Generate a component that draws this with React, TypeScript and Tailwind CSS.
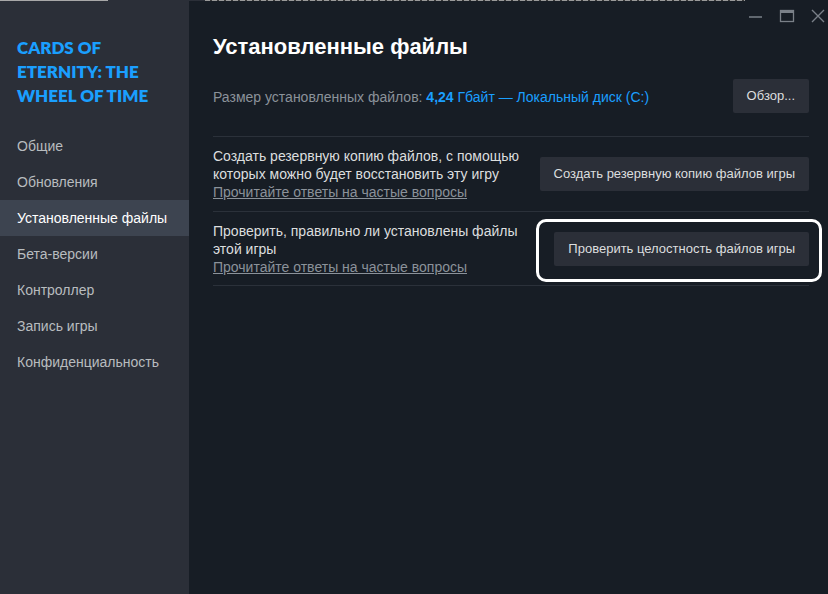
import React from "react";

const navItems = [
  "Общие",
  "Обновления",
  "Установленные файлы",
  "Бета-версии",
  "Контроллер",
  "Запись игры",
  "Конфиденциальность",
];

export default function App() {
  return (
    <div
      className="relative w-[828px] h-[594px] flex bg-[#171d25] overflow-hidden"
      style={{ fontFamily: '"Liberation Sans", Arial, sans-serif' }}
    >
      {/* top cut-off strip */}
      <div className="absolute top-0 left-0 w-full h-[1px] flex">
        <div className="w-[108px] bg-[#a8a8a8]" />
        <div className="w-[97px] bg-[#2b2f38]" />
        <div className="w-[540px] bg-[repeating-linear-gradient(90deg,#9a9a9a_0px,#9a9a9a_5px,#3a3a3a_5px,#3a3a3a_7px)]" />
      </div>

      {/* Sidebar */}
      <aside className="w-[189px] shrink-0 bg-[#2b2f38] flex flex-col pt-[36px]">
        <div
          className="px-[17px] text-[#1a9fff] text-[17px] leading-[24px] font-bold uppercase"
          style={{ fontFamily: '"Lato", "Open Sans", sans-serif', fontWeight: 800 }}
        >
          Cards of Eternity: The Wheel of Time
        </div>
        <nav className="mt-[20px] flex flex-col">
          {navItems.map((item) => (
            <div
              key={item}
              className={
                item === "Установленные файлы"
                  ? "h-[36px] flex items-center px-[17px] text-[14px] text-white bg-[#3d4450]"
                  : "h-[36px] flex items-center px-[17px] text-[14px] text-[#b8bcbf]"
              }
            >
              {item}
            </div>
          ))}
        </nav>
      </aside>

      {/* Main */}
      <main className="flex-1 flex flex-col pl-[24px] pr-[19px] pt-[33px]">
        <h1 className="text-[22px] leading-[28px] font-bold text-white">Установленные файлы</h1>

        <div className="mt-[18px] flex items-center justify-between pb-[23px] border-b border-[#2b313a]">
          <div className="text-[14px] text-[#8b929a] mt-[2px]">
            Размер установленных файлов:{" "}
            <span className="text-[#1a9fff]">
              <span className="font-bold">4,24</span> Гбайт — Локальный диск (C:)
            </span>
          </div>
          <button className="h-[34px] px-[14px] rounded-[2px] bg-[#2b2f38] text-[13px] text-[#dcdedf]">
            Обзор...
          </button>
        </div>

        <div className="h-[75px] flex items-center justify-between border-b border-[#2b313a]">
          <div className="text-[14px] leading-[18px] text-[#dcdedf]">
            <div>Создать резервную копию файлов, с помощью</div>
            <div>которых можно будет восстановить эту игру</div>
            <div className="text-[#8b929a] underline">Прочитайте ответы на частые вопросы</div>
          </div>
          <button className="h-[34px] px-[14px] rounded-[2px] bg-[#2b2f38] text-[13px] text-[#dcdedf]">
            Создать резервную копию файлов игры
          </button>
        </div>

        <div className="h-[74px] flex items-center justify-between border-b border-[#2b313a]">
          <div className="text-[14px] leading-[18px] text-[#dcdedf]">
            <div>Проверить, правильно ли установлены файлы</div>
            <div>этой игры</div>
            <div className="text-[#8b929a] underline">Прочитайте ответы на частые вопросы</div>
          </div>
          <div className="relative">
            <button className="h-[34px] px-[14px] rounded-[2px] bg-[#2b2f38] text-[13px] text-[#dcdedf]">
              Проверить целостность файлов игры
            </button>
            <div className="absolute left-[-18px] right-[-13px] top-[-13px] bottom-[-16px] border-[3px] border-white rounded-[10px]" />
          </div>
        </div>
      </main>

      {/* window controls */}
      <div className="absolute top-[8px] right-[0px] flex items-center gap-[14px]">
        <svg width="18" height="16" viewBox="0 0 18 16">
          <line x1="3" y1="9" x2="16" y2="9" stroke="#7a8088" strokeWidth="1.5" />
        </svg>
        <svg width="18" height="16" viewBox="0 0 18 16">
          <rect x="2.5" y="2.5" width="13" height="11" fill="none" stroke="#7a8088" strokeWidth="1.3" />
          <line x1="2.5" y1="4" x2="15.5" y2="4" stroke="#7a8088" strokeWidth="2" />
        </svg>
        <svg width="18" height="16" viewBox="0 0 18 16">
          <path d="M2 2 L14 14 M14 2 L2 14" stroke="#7a8088" strokeWidth="1.4" />
        </svg>
      </div>
    </div>
  );
}
